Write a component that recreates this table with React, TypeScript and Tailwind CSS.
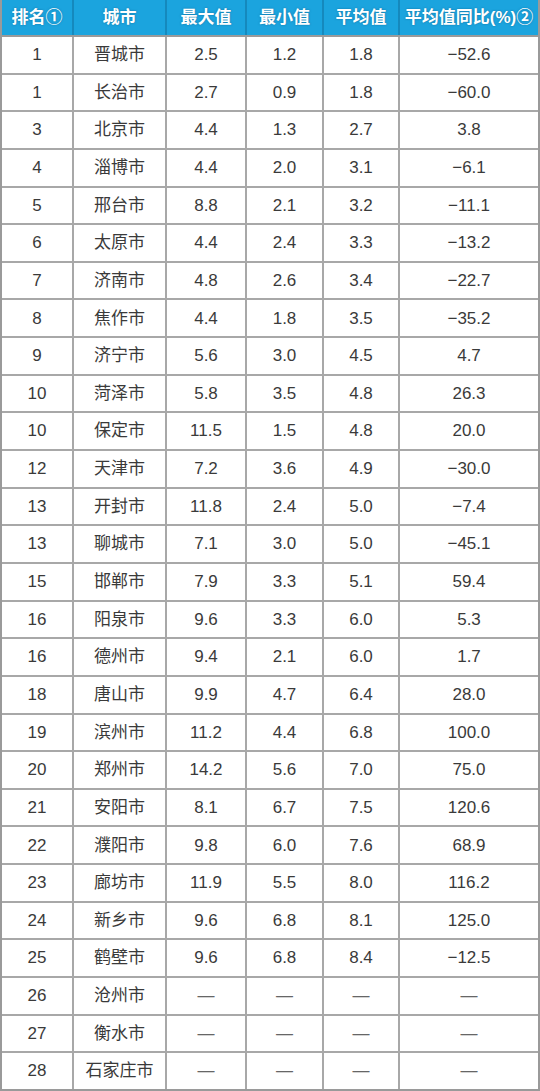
const rows: string[][] = [
  ["1", "晋城市", "2.5", "1.2", "1.8", "−52.6"],
  ["1", "长治市", "2.7", "0.9", "1.8", "−60.0"],
  ["3", "北京市", "4.4", "1.3", "2.7", "3.8"],
  ["4", "淄博市", "4.4", "2.0", "3.1", "−6.1"],
  ["5", "邢台市", "8.8", "2.1", "3.2", "−11.1"],
  ["6", "太原市", "4.4", "2.4", "3.3", "−13.2"],
  ["7", "济南市", "4.8", "2.6", "3.4", "−22.7"],
  ["8", "焦作市", "4.4", "1.8", "3.5", "−35.2"],
  ["9", "济宁市", "5.6", "3.0", "4.5", "4.7"],
  ["10", "菏泽市", "5.8", "3.5", "4.8", "26.3"],
  ["10", "保定市", "11.5", "1.5", "4.8", "20.0"],
  ["12", "天津市", "7.2", "3.6", "4.9", "−30.0"],
  ["13", "开封市", "11.8", "2.4", "5.0", "−7.4"],
  ["13", "聊城市", "7.1", "3.0", "5.0", "−45.1"],
  ["15", "邯郸市", "7.9", "3.3", "5.1", "59.4"],
  ["16", "阳泉市", "9.6", "3.3", "6.0", "5.3"],
  ["16", "德州市", "9.4", "2.1", "6.0", "1.7"],
  ["18", "唐山市", "9.9", "4.7", "6.4", "28.0"],
  ["19", "滨州市", "11.2", "4.4", "6.8", "100.0"],
  ["20", "郑州市", "14.2", "5.6", "7.0", "75.0"],
  ["21", "安阳市", "8.1", "6.7", "7.5", "120.6"],
  ["22", "濮阳市", "9.8", "6.0", "7.6", "68.9"],
  ["23", "廊坊市", "11.9", "5.5", "8.0", "116.2"],
  ["24", "新乡市", "9.6", "6.8", "8.1", "125.0"],
  ["25", "鹤壁市", "9.6", "6.8", "8.4", "−12.5"],
  ["26", "沧州市", "—", "—", "—", "—"],
  ["27", "衡水市", "—", "—", "—", "—"],
  ["28", "石家庄市", "—", "—", "—", "—"],
];

const headers = ["排名①", "城市", "最大值", "最小值", "平均值", "平均值同比(%)②"];
const widths = ["w-[72px]", "w-[93px]", "w-[80px]", "w-[77px]", "w-[76px]", "flex-1"];

export default function App() {
  return (
    <div
      className="w-[540px] h-[1091px] flex flex-col bg-white text-[#3a3a3a] border-l-2 border-r-2 border-b-2 border-[#9a9a9a]"
      style={{ fontFamily: '"Liberation Sans", "Noto Sans CJK SC", sans-serif' }}
    >
      {/* header */}
      <div className="flex h-[37px] bg-[#1ba4de] text-white font-bold text-[17px] border-b-2 border-[#9a9a9a]">
        {headers.map((h, i) => (
          <div
            key={h}
            className={`${widths[i]} flex items-center justify-center whitespace-nowrap ${i < 5 ? "border-r-2 border-[#1589bd]" : ""}`}
            style={{ textShadow: "0 0 2px rgba(0,60,100,0.5)" }}
          >
            {h}
          </div>
        ))}
      </div>

      {rows.map((r, ri) => (
        <div
          key={ri}
          className={`flex flex-1 text-[17px] ${ri < rows.length - 1 ? "border-b-2 border-[#a8a8a8]" : ""}`}
        >
          {r.map((c, ci) => (
            <div
              key={ci}
              className={`${widths[ci]} flex items-center justify-center ${ci < 5 ? "border-r-2 border-[#a8a8a8]" : ""} ${c === "—" ? "text-[#666]" : ""}`}
            >
              {c}
            </div>
          ))}
        </div>
      ))}
    </div>
  );
}
